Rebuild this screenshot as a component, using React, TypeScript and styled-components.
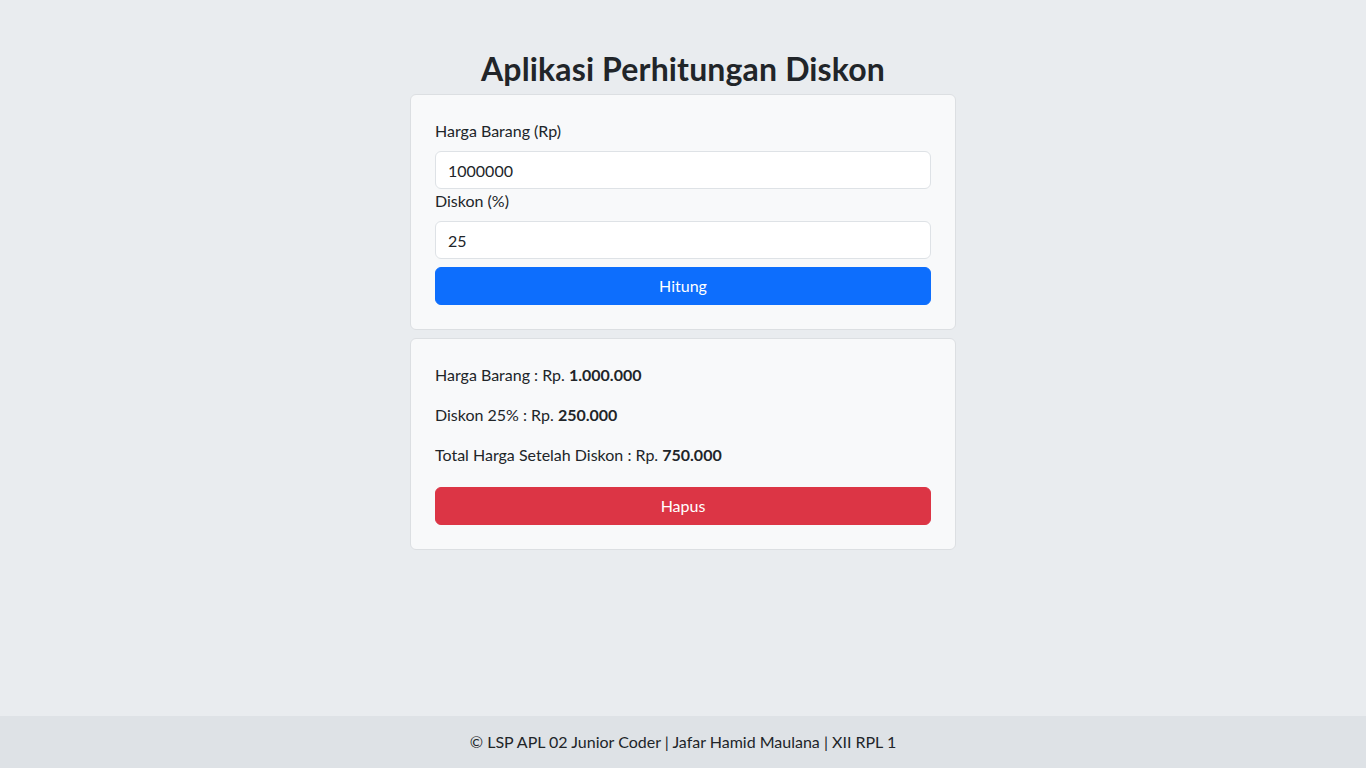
import React from "react";
import styled, { createGlobalStyle } from "styled-components";

const GlobalStyle = createGlobalStyle`
  html, body { margin: 0; padding: 0; }
  body {
    font-family: Lato, "Noto Sans", "Liberation Sans", sans-serif;
    font-size: 16px;
    line-height: 1.5;
    color: #212529;
    background: #e9ecef;
  }
  * { box-sizing: border-box; }
`;

const Page = styled.div`
  min-height: 100vh;
  display: flex;
  flex-direction: column;
`;

const Main = styled.main`
  display: flex;
  flex-direction: column;
  align-items: center;
  padding-top: 50px;
`;

const Title = styled.h1`
  margin: 0 0 6px;
  font-size: 32px;
  line-height: 1.2;
  font-weight: 700;
  letter-spacing: 0.15px;
  text-align: center;
`;

const Card = styled.section<{ $gap?: number }>`
  width: 546px;
  background: #f8f9fa;
  border: 1px solid #dcdfe2;
  border-radius: 6px;
  padding: 24px;
  margin-top: ${(p) => p.$gap ?? 0}px;
  display: flex;
  flex-direction: column;
`;

const Label = styled.label`
  display: block;
  margin-bottom: 8px;
  line-height: 24px;
`;

const Input = styled.input`
  display: block;
  width: 100%;
  height: 38px;
  padding: 6px 12px;
  font: inherit;
  color: #212529;
  background: #fff;
  border: 1px solid #dee2e6;
  border-radius: 6px;
  outline: none;
`;

const Button = styled.button<{ $variant: "primary" | "danger"; $mt: number }>`
  display: block;
  width: 100%;
  height: 38px;
  margin-top: ${(p) => p.$mt}px;
  font: inherit;
  color: #fff;
  background: ${(p) => (p.$variant === "primary" ? "#0d6efd" : "#dc3545")};
  border: 1px solid ${(p) => (p.$variant === "primary" ? "#0d6efd" : "#dc3545")};
  border-radius: 6px;
  cursor: pointer;
`;

const ResultLine = styled.p`
  margin: 0 0 16px;
  line-height: 24px;
`;

const Footer = styled.footer`
  margin-top: auto;
  background: #dee2e6;
  text-align: center;
  padding: 14px 0;
  line-height: 24px;
`;

export default function App() {
  return (
    <Page>
      <GlobalStyle />
      <Main>
        <Title>Aplikasi Perhitungan Diskon</Title>
        <Card>
          <Label htmlFor="harga">Harga Barang (Rp)</Label>
          <Input id="harga" defaultValue="1000000" />
          <Label htmlFor="diskon">Diskon (%)</Label>
          <Input id="diskon" defaultValue="25" />
          <Button $variant="primary" $mt={8}>Hitung</Button>
        </Card>
        <Card $gap={8}>
          <ResultLine>
            Harga Barang : Rp. <b>1.000.000</b>
          </ResultLine>
          <ResultLine>
            Diskon 25% : Rp. <b>250.000</b>
          </ResultLine>
          <ResultLine>
            Total Harga Setelah Diskon : Rp. <b>750.000</b>
          </ResultLine>
          <Button $variant="danger" $mt={4}>Hapus</Button>
        </Card>
      </Main>
      <Footer>© LSP APL 02 Junior Coder | Jafar Hamid Maulana | XII RPL 1</Footer>
    </Page>
  );
}
